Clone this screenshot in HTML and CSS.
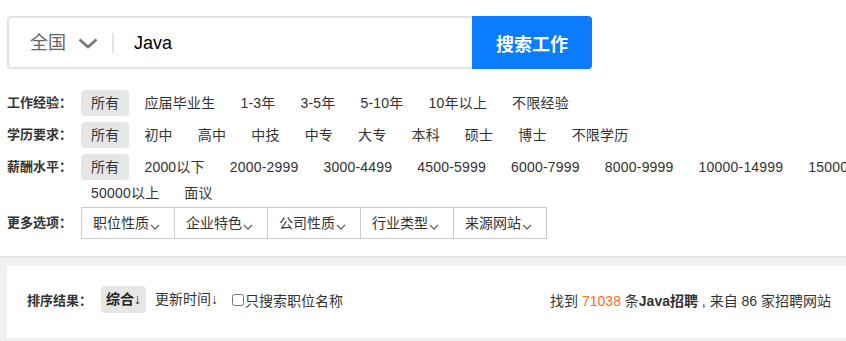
FILE: index.html
```html
<!doctype html>
<html>
<head>
<meta charset="UTF-8">
<title>Java招聘</title>
<link rel="stylesheet" href="styles.css">
</head>
<body>
<div class="header">
	<div class="search">
		<div class="search-field">
			<span class="city">全国</span>
			<svg class="city-arrow" width="20" height="11" viewBox="0 0 20 11"><polyline points="1.5,1.5 10,9 18.5,1.5" fill="none" stroke="#777" stroke-width="2.6"/></svg>
			<span class="sep"></span>
			<span class="keyword">Java</span>
		</div>
		<a class="search-btn" href="#">搜索工作</a>
	</div>
	<div class="filters">
		<div class="filter-row">
			<span class="filter-label">工作经验：</span>
			<ul class="filter-list">
				<li class="on">所有</li>
				<li>应届毕业生</li>
				<li>1-3年</li>
				<li>3-5年</li>
				<li>5-10年</li>
				<li>10年以上</li>
				<li>不限经验</li>
			</ul>
		</div>
		<div class="filter-row">
			<span class="filter-label">学历要求：</span>
			<ul class="filter-list">
				<li class="on">所有</li>
				<li>初中</li>
				<li>高中</li>
				<li>中技</li>
				<li>中专</li>
				<li>大专</li>
				<li>本科</li>
				<li>硕士</li>
				<li>博士</li>
				<li>不限学历</li>
			</ul>
		</div>
		<div class="filter-row salary">
			<span class="filter-label">薪酬水平：</span>
			<ul class="filter-list">
				<li class="on">所有</li>
				<li>2000以下</li>
				<li>2000-2999</li>
				<li>3000-4499</li>
				<li>4500-5999</li>
				<li>6000-7999</li>
				<li>8000-9999</li>
				<li>10000-14999</li>
				<li>15000-19999</li>
				<li>20000-29999</li>
				<li>30000-49999</li>
				<li>50000以上</li>
				<li>面议</li>
			</ul>
		</div>
		<div class="filter-row more">
			<span class="filter-label">更多选项：</span>
			<ul class="more-list">
				<li>职位性质<svg width="10" height="6" viewBox="0 0 10 6"><polyline points="1,1 5,5 9,1" fill="none" stroke="#666" stroke-width="1.3"/></svg></li>
				<li>企业特色<svg width="10" height="6" viewBox="0 0 10 6"><polyline points="1,1 5,5 9,1" fill="none" stroke="#666" stroke-width="1.3"/></svg></li>
				<li>公司性质<svg width="10" height="6" viewBox="0 0 10 6"><polyline points="1,1 5,5 9,1" fill="none" stroke="#666" stroke-width="1.3"/></svg></li>
				<li>行业类型<svg width="10" height="6" viewBox="0 0 10 6"><polyline points="1,1 5,5 9,1" fill="none" stroke="#666" stroke-width="1.3"/></svg></li>
				<li>来源网站<svg width="10" height="6" viewBox="0 0 10 6"><polyline points="1,1 5,5 9,1" fill="none" stroke="#666" stroke-width="1.3"/></svg></li>
			</ul>
		</div>
	</div>
</div>
<div class="result">
	<div class="sort-bar">
		<span class="sort-label">排序结果：</span>
		<span class="sort-item on">综合↓</span>
		<span class="sort-item">更新时间↓</span>
		<label class="only-title"><input type="checkbox">只搜索职位名称</label>
		<p class="total">找到 <em>71038</em> 条<b>Java招聘</b> , 来自 86 家招聘网站</p>
	</div>
</div>
</body>
</html>
```
FILE: styles.css
```css
*{margin:0;padding:0;list-style:none;}
html,body{overflow:hidden;}
body{background:#f0f0f0;font-family:"Liberation Sans","Noto Sans CJK SC",sans-serif;font-size:14px;color:#333;}
a{text-decoration:none;}

.header{background:#fff;padding:16px 0 17px 7px;box-shadow:0 1px 2px rgba(0,0,0,.08);overflow:hidden;}

.search{display:flex;height:53px;}
.search-field{width:463px;height:49px;border:2px solid #e3e3e3;border-right:0;border-radius:4px 0 0 4px;display:flex;align-items:center;}
.city{font-size:18px;color:#666;margin-left:21px;line-height:20px;}
.city-arrow{margin-left:12px;margin-top:2px;}
.sep{width:2px;height:20px;background:#e2e2e2;margin-left:14px;}
.keyword{font-size:18px;color:#000;margin-left:20px;line-height:20px;}
.search-btn{width:120px;background:#0a7cfd;color:#fff;font-size:18px;font-weight:bold;border-radius:0 4px 4px 0;display:flex;align-items:center;justify-content:center;}

.filters{margin-top:21px;}
.filter-row{display:flex;line-height:26px;margin-bottom:6px;}
.filter-row.salary{margin-bottom:1px;}
.filter-row.more{margin-bottom:0;align-items:center;}
.filter-label{width:74px;flex:none;font-size:13px;font-weight:bold;color:#333;}
.filter-list{display:flex;flex-wrap:wrap;column-gap:5px;width:1100px;flex:none;}
.filter-list li{padding:0 10px;height:26px;border-radius:4px;letter-spacing:0.2px;cursor:pointer;}
.filter-list li.on{background:#e6e6e6;}

.more-list{display:flex;}
.more-list li{height:30px;line-height:30px;padding:0 14px 0 11px;border:1px solid #ccc;border-left:0;cursor:pointer;}
.more-list li:first-child{border-left:1px solid #ccc;}
.more-list li svg{margin-left:1px;vertical-align:-2px;}

.result{background:#fff;margin:10px 0 0 7px;}
.sort-bar{display:flex;align-items:center;padding:20px 15px 25px 20px;border-bottom:1px solid #eee;}
.sort-label{font-size:13px;font-weight:bold;width:74px;flex:none;}
.sort-item{line-height:27px;padding:0 5px;border-radius:4px;margin-right:4px;cursor:pointer;}
.sort-item.on{background:#e6e6e6;color:#222;font-weight:bold;}
.only-title{display:flex;align-items:center;margin-left:1px;}
.only-title input{width:12px;height:12px;margin:0 1px 0 4px;}
.total{margin-left:auto;}
.total em{font-style:normal;color:#ff6a13;}
.total b{color:#333;}
```
